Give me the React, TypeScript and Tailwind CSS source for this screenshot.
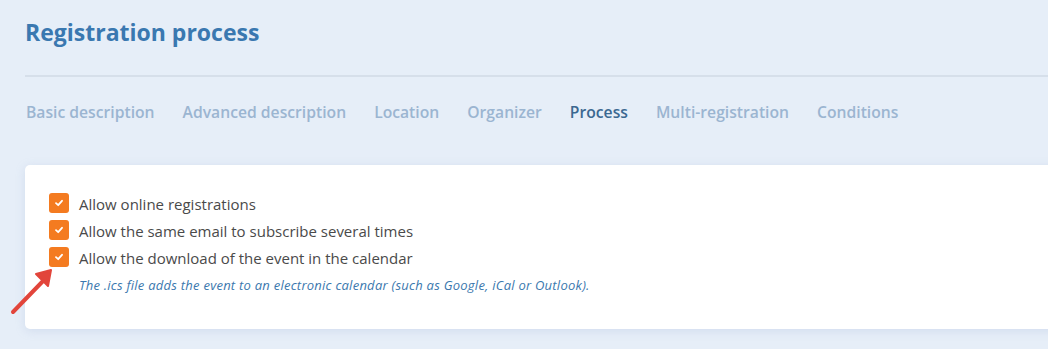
import React from "react";

const tabs = [
  "Basic description",
  "Advanced description",
  "Location",
  "Organizer",
  "Process",
  "Multi-registration",
  "Conditions",
];

const options = [
  "Allow online registrations",
  "Allow the same email to subscribe several times",
  "Allow the download of the event in the calendar",
];

function Check() {
  return (
    <span className="w-[20px] h-[20px] rounded-[3px] bg-[#f47b20] flex items-center justify-center shrink-0">
      <svg width="10" height="10" viewBox="0 0 10 10">
        <path d="M2 5.2 L4.2 7.2 L8 2.8" fill="none" stroke="#fff" strokeWidth="1.8" strokeLinecap="round" strokeLinejoin="round" />
      </svg>
    </span>
  );
}

export default function App() {
  return (
    <div className="w-[1048px] h-[349px] overflow-hidden bg-[#e6eef8] relative" style={{ fontFamily: "'Open Sans', 'Noto Sans', sans-serif" }}>
      <div className="pl-[25px]">
        <h1 className="pt-[17px] h-[75px] text-[23px] font-bold text-[#3a78b0] leading-[30px]">Registration process</h1>
        <div className="h-[2px] bg-[#d6dfea]" />
        <div className="flex gap-[28px] pt-[23px] h-[88px] pl-[1px]">
          {tabs.map((t) => (
            <span key={t} className={`text-[15.7px] font-semibold leading-[24px] ${t === "Process" ? "text-[#3b6891]" : "text-[#9bb5d1]"}`}>{t}</span>
          ))}
        </div>
        <div className="w-[1100px] h-[164px] bg-white rounded-[5px] shadow-[0_2px_10px_rgba(150,170,210,0.25)] pt-[28px] pl-[24px]">
          <div className="flex flex-col gap-[7px]">
            {options.map((o) => (
              <label key={o} className="flex items-center gap-[10px] h-[20px]">
                <Check />
                <span className="text-[15px] text-[#4a4a4a] leading-[22px] mt-[1px]">{o}</span>
              </label>
            ))}
          </div>
          <p className="mt-[10px] ml-[30px] text-[13px] italic tracking-[0.25px] text-[#3b78ae] leading-[16px]">
            The .ics file adds the event to an electronic calendar (such as Google, iCal or Outlook).
          </p>
        </div>
      </div>
      <svg className="absolute left-0 top-[262px]" width="60" height="60" viewBox="0 0 60 60">
        <line x1="13" y1="50" x2="44" y2="18" stroke="#e2453b" strokeWidth="4" strokeLinecap="round" />
        <path d="M36 12 L51 8 L48 24 Z" fill="#e2453b" stroke="#e2453b" strokeWidth="2" strokeLinejoin="round" />
      </svg>
    </div>
  );
}
